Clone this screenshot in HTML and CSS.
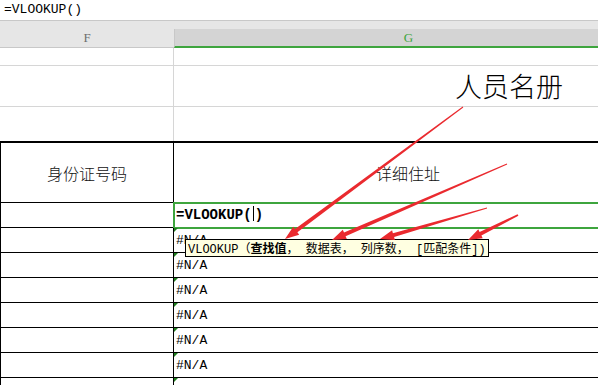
FILE: index.html
```html
<!DOCTYPE html>
<html>
<head>
    <title>VLOOKUP</title>
<link rel="stylesheet" href="styles.css">
</head>
<body>
<div id="sheet">

    <div class="formula-bar">=VLOOKUP()</div>

    <div class="col-band"></div>
    <div class="col-heads">
        <div class="col-head">F</div>
        <div class="col-head active">G</div>
    </div>

    <div class="grow r1"><div class="c"></div><div class="c"></div></div>
    <div class="grow r2"><div class="c"></div><div class="c title">人员名册</div></div>
    <div class="grow r3"><div class="c"></div><div class="c"></div></div>

    <div class="trow head"><div class="c">身份证号码</div><div class="c">详细住址</div></div>
    <div class="trow"><div class="c"></div><div class="c formula">=VLOOKUP(<span class="caret"></span>)
        <div class="tip">VLOOKUP（<b>查找值</b>， 数据表， 列序数， [匹配条件])</div>
    </div></div>
    <div class="trow"><div class="c"></div><div class="c na">#N/A</div></div>
    <div class="trow"><div class="c"></div><div class="c na">#N/A</div></div>
    <div class="trow"><div class="c"></div><div class="c na">#N/A</div></div>
    <div class="trow"><div class="c"></div><div class="c na">#N/A</div></div>
    <div class="trow"><div class="c"></div><div class="c na">#N/A</div></div>
    <div class="trow"><div class="c"></div><div class="c na">#N/A</div></div>
    <div class="trow"><div class="c"></div><div class="c na"></div></div>

    <svg class="arrows" width="598" height="385" viewBox="0 0 598 385">
        <polygon points="462.7,106.6 295.0,229.1 293.2,226.7 285,239 299.2,234.7 297.4,232.3 463.3,107.4"/>
        <polygon points="506.8,163.5 344.0,232.6 342.8,229.8 332,240 346.8,239.0 345.6,236.2 507.2,164.5"/>
        <polygon points="486.9,207.5 392.9,233.2 392.1,230.3 380,239 394.9,239.9 394.1,237.0 487.1,208.5"/>
        <polygon points="517.6,214.2 479.6,231.9 478.3,229.2 468,240 482.7,238.2 481.4,235.5 518.4,215.8"/>
    </svg>
</div>
</body>
</html>
```
FILE: styles.css
```css
BODY {
    margin: 0;
    padding: 0;
    width: 598px;
    height: 385px;
    overflow: hidden;
    background: #fff;
}
#sheet {
    position: relative;
    width: 642px;
    font-family: "Liberation Mono", monospace;
}
.formula-bar {
    height: 20px;
    line-height: 20px;
    padding-left: 4px;
    font-size: 13px;
    color: #000;
}
.col-band {
    height: 8px;
    background: #e6e6e6;
    border-top: 1px solid #c8c8c8;
}
.col-heads {
    display: grid;
    grid-template-columns: 174px 468px;
    height: 19px;
}
.col-head {
    background: #e6e6e6;
    border-bottom: 1px solid #c8c8c8;
    color: #6e6e6e;
    font-family: "Liberation Serif", serif;
    font-size: 13px;
    line-height: 18px;
    text-align: center;
}
.col-head.active {
    background: #d4d4d4;
    border-left: 1px solid #c8c8c8;
    border-bottom: 2px solid #3ea53e;
    color: #3ea53e;
    line-height: 17px;
}
.grow, .trow {
    display: grid;
    grid-template-columns: 174px 468px;
}
.grow {
    border-bottom: 1px solid #d6d6d6;
}
.grow .c:first-child {
    border-right: 1px solid #d6d6d6;
}
.r1 { height: 17px; }
.r2 { height: 40px; }
.r3 { height: 34px; border-bottom: 2px solid #000; }
.title {
    padding-left: 281px;
    font-family: "Noto Sans CJK SC", sans-serif;
    font-weight: 300;
    font-size: 27px;
    line-height: 40px;
    color: #000;
}
.trow {
    height: 24px;
    border-bottom: 1px solid #000;
}
.trow .c:first-child {
    border-left: 1px solid #000;
    border-right: 1px solid #000;
}
.trow.head {
    height: 59px;
}
.trow.head .c {
    display: flex;
    align-items: center;
    justify-content: center;
    font-family: "Noto Sans CJK SC", sans-serif;
    font-weight: 300;
    font-size: 16px;
    color: #111;
}
.trow .c {
    position: relative;
}
.formula {
    font-weight: bold;
    font-size: 14px;
    line-height: 24px;
    padding-left: 2px;
}
.formula::after {
    content: "";
    position: absolute;
    left: -1px;
    top: -1px;
    right: 0;
    bottom: -2px;
    border: 2px solid #3ea53e;
    box-sizing: border-box;
}
.caret {
    display: inline-block;
    width: 1px;
    height: 15px;
    background: #000;
    vertical-align: -2px;
    margin: 0 1px;
}
.na {
    font-size: 13px;
    line-height: 26px;
    padding-left: 2px;
}
.na::before {
    content: "";
    position: absolute;
    left: 0;
    top: 0;
    border-top: 4px solid #1e7d1e;
    border-right: 4px solid transparent;
}
.tip {
    position: absolute;
    left: 11px;
    top: 36px;
    height: 16px;
    padding: 0 2px;
    border: 1px solid #000;
    background: #ffffe1;
    font-weight: normal;
    font-size: 12px;
    line-height: 16px;
    white-space: nowrap;
    font-family: "Liberation Mono", "Noto Sans CJK SC", monospace;
    z-index: 2;
}
.tip b {
    font-family: "Noto Sans CJK SC", sans-serif;
}
.arrows {
    position: absolute;
    left: 0;
    top: 0;
    z-index: 3;
}
.arrows polygon {
    fill: #ea2a2f;
}
```
